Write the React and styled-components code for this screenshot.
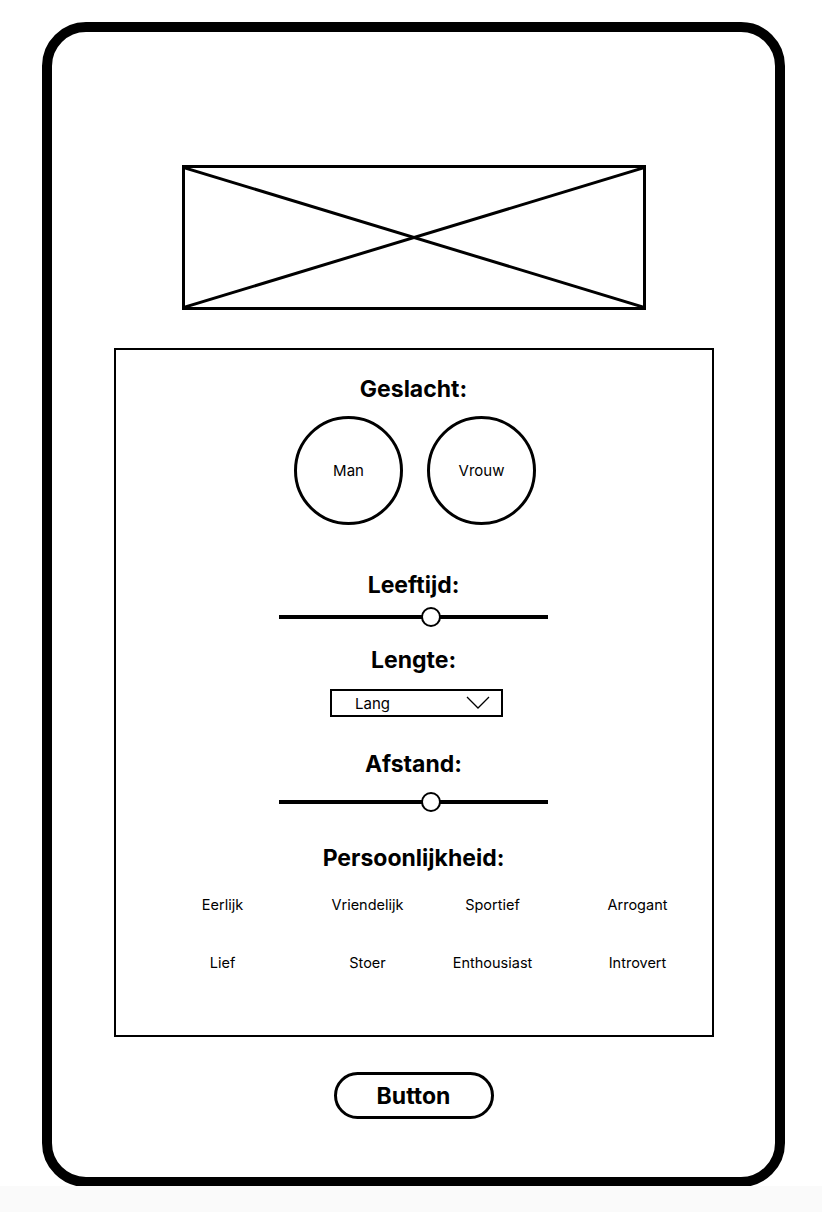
import React from 'react'
import styled, { createGlobalStyle } from 'styled-components'

const Global = createGlobalStyle`
  html, body {
    margin: 0;
    padding: 0;
    background: #fafafa;
    font-family: Inter, "Noto Sans", "Liberation Sans", sans-serif;
    color: #000;
  }
`

const Page = styled.div`
  background: #fff;
  height: 1186px;
  padding-top: 22px;
  box-sizing: border-box;
`

const Phone = styled.div`
  box-sizing: border-box;
  margin-left: 42px;
  width: 743px;
  height: 1165px;
  border: 10px solid #000;
  border-radius: 44px;
  display: flex;
  flex-direction: column;
  align-items: center;
`

const Placeholder = styled.div`
  box-sizing: border-box;
  margin-top: 133px;
  width: 464px;
  height: 145px;
  border: 3px solid #000;
  svg {
    display: block;
    width: 100%;
    height: 100%;
  }
`

const Panel = styled.section`
  box-sizing: border-box;
  margin-top: 38px;
  width: 600px;
  height: 689px;
  border: 2px solid #000;
  padding-top: 26px;
  display: flex;
  flex-direction: column;
  align-items: center;
`

const Heading = styled.h2`
  margin: ${p => p.$top || 0}px 0 0;
  font-size: 23px;
  line-height: 26px;
  font-weight: 700;
`

const Choices = styled.div`
  margin-top: 14px;
  margin-left: 3px;
  display: flex;
  gap: 24px;
`

const Choice = styled.div`
  box-sizing: border-box;
  width: 109px;
  height: 109px;
  border: 3px solid #000;
  border-radius: 50%;
  display: flex;
  align-items: center;
  justify-content: center;
  font-size: 15px;
`

const Slider = styled.div`
  position: relative;
  margin-top: ${p => p.$top}px;
  width: 269px;
  height: 20px;
  display: flex;
  align-items: center;
`

const Track = styled.div`
  width: 100%;
  height: 4px;
  background: #000;
`

const Thumb = styled.div`
  position: absolute;
  top: 0;
  box-sizing: border-box;
  width: 20px;
  height: 20px;
  margin-left: -10px;
  border: 2px solid #000;
  border-radius: 50%;
  background: #fff;
`

const Select = styled.div`
  box-sizing: border-box;
  margin-top: 16px;
  margin-left: 6px;
  width: 173px;
  height: 28px;
  border: 2px solid #000;
  display: flex;
  align-items: center;
  justify-content: space-between;
  padding: 0 11px 0 23px;
  font-size: 15px;
`

const Traits = styled.div`
  margin-top: 24px;
  align-self: stretch;
  padding-left: 17px;
  display: grid;
  grid-template-columns: 180px 110px 140px 150px;
  row-gap: 38px;
  font-size: 14.5px;
  line-height: 20px;
  text-align: center;
`

const Button = styled.button`
  box-sizing: border-box;
  margin-top: 35px;
  width: 160px;
  height: 47px;
  border: 3px solid #000;
  border-radius: 24px;
  background: #fff;
  font-family: inherit;
  font-size: 23px;
  font-weight: 700;
  color: #000;
  padding: 0;
`

const Range = ({ value, top }) => (
  <Slider $top={top}>
    <Track />
    <Thumb style={{ left: `${value}%` }} />
  </Slider>
)

const traits = ['Eerlijk', 'Vriendelijk', 'Sportief', 'Arrogant', 'Lief', 'Stoer', 'Enthousiast', 'Introvert']

export default function App() {
  return (
    <Page>
      <Global />
      <Phone>
        <Placeholder>
          <svg viewBox="0 0 100 100" preserveAspectRatio="none">
            <line x1="0" y1="0" x2="100" y2="100" stroke="#000" strokeWidth="3" vectorEffect="non-scaling-stroke" />
            <line x1="0" y1="100" x2="100" y2="0" stroke="#000" strokeWidth="3" vectorEffect="non-scaling-stroke" />
          </svg>
        </Placeholder>
        <Panel>
          <Heading>Geslacht:</Heading>
          <Choices>
            <Choice>Man</Choice>
            <Choice>Vrouw</Choice>
          </Choices>
          <Heading $top={47}>Leeftijd:</Heading>
          <Range value={56.5} top={9} />
          <Heading $top={20}>Lengte:</Heading>
          <Select>
            <span>Lang</span>
            <svg width="24" height="14" viewBox="0 0 24 14">
              <polyline points="1,1 12,12 23,1" fill="none" stroke="#000" strokeWidth="1.3" />
            </svg>
          </Select>
          <Heading $top={34}>Afstand:</Heading>
          <Range value={56.5} top={15} />
          <Heading $top={33}>Persoonlijkheid:</Heading>
          <Traits>
            {traits.map(t => <div key={t}>{t}</div>)}
          </Traits>
        </Panel>
        <Button>Button</Button>
      </Phone>
    </Page>
  )
}
